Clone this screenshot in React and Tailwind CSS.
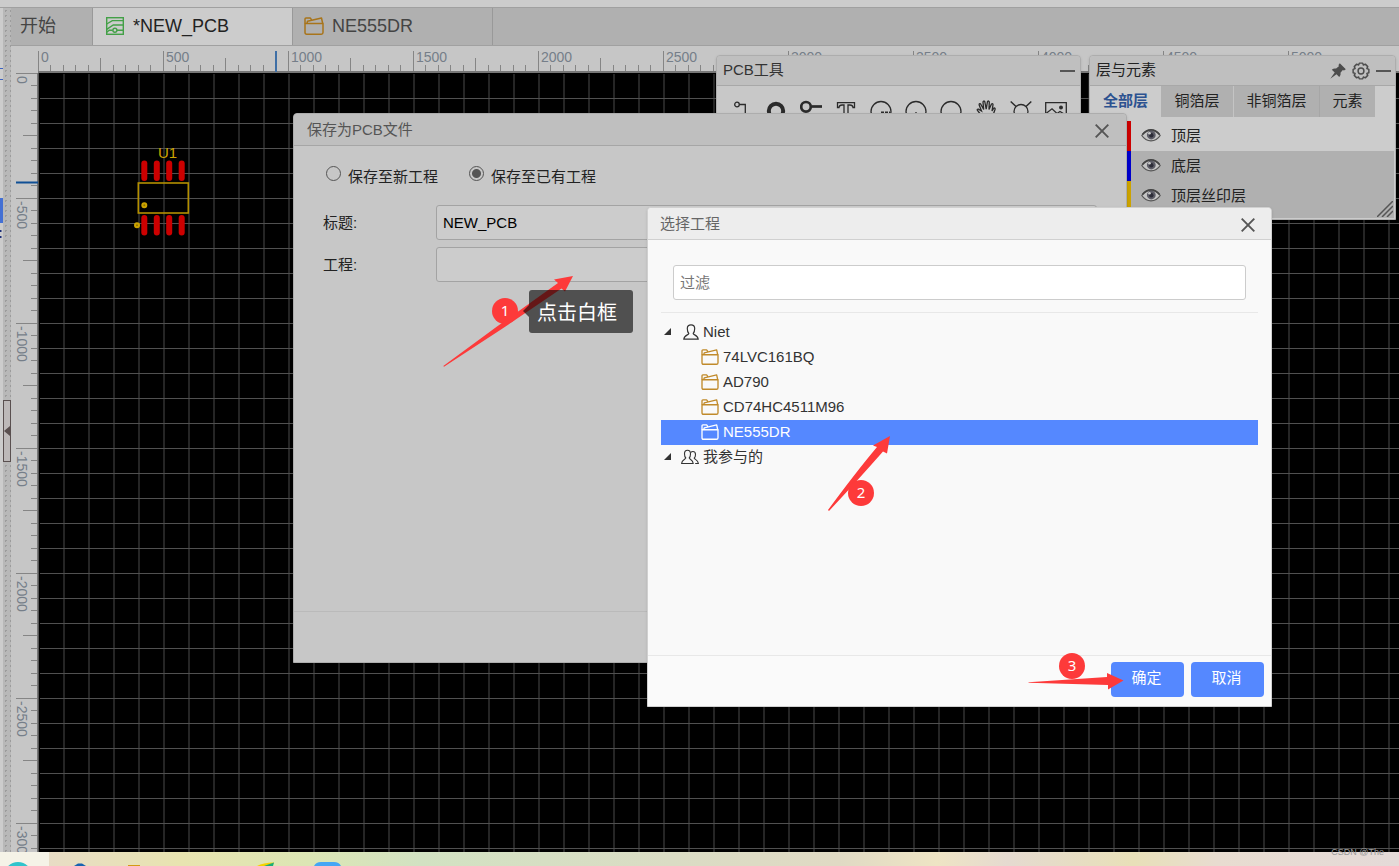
/**
 * PCB editor workspace with the "save as PCB" dialog and the project picker
 * on top, plus numbered guide marks for the three steps.
 */
import { useState } from 'react'

const STEP = 12.5
const TOP_TICKS = Array.from({ length: 109 }, (_, i) => i)
const SIDE_TICKS = Array.from({ length: 66 }, (_, i) => i)

const LAYERS = [
  { name: '顶层', color: 'bg-[#cc0000]', row: 'bg-[#cccccc]' },
  { name: '底层', color: 'bg-[#0000cc]', row: 'bg-[#b0b0b0]' },
  { name: '顶层丝印层', color: 'bg-[#cca300]', row: 'bg-[#b0b0b0]' },
]

const PROJECTS = ['74LVC161BQ', 'AD790', 'CD74HC4511M96', 'NE555DR']

function FolderIcon({ className }) {
  return (
    <svg className={className} viewBox="0 0 20 18" fill="none" stroke="currentColor" strokeWidth="1.5" strokeLinejoin="round">
      <path d="M1 6.500h18v9q0 1.700-1.700 1.700H2.700Q1 17.200 1 15.500z" />
      <path d="M1 6.500V2q0-1 1-1h4.200l1.300 1.700M3 6.200l.5-1.900L17.500 1l1.200 5.500" />
    </svg>
  )
}

function BoardIcon() {
  return (
    <svg className="w-[18px] h-[18px] shrink-0" viewBox="0 0 18 18" fill="none" stroke="#43a047" strokeWidth="1.400">
      <rect x="0.700" y="0.700" width="16.600" height="16.600" />
      <path d="M.7 7 6.300 3.600h11M.7 12.300 7.300 8h10M.7 15.200l2.600-1.900h3.400M11 13.300h6.300" />
      <circle cx="8.900" cy="13.200" r="2" />
    </svg>
  )
}

function CloseIcon() {
  return (
    <svg className="w-[14px] h-[14px]" viewBox="0 0 14 14" stroke="#555" strokeWidth="1.900">
      <path d="M0.700 0.700l12.600 12.600M13.300 0.700L0.700 13.300" />
    </svg>
  )
}

function UserIcon() {
  return (
    <svg className="w-4 h-4 shrink-0" viewBox="0 0 16 16" fill="none" stroke="#333" strokeWidth="1.200">
      <path d="M5.800 9.500C4.500 8 4.300 6.500 4.300 4.500 4.300 2 5.700.8 8 .8s3.700 1.200 3.700 3.700c0 2-.2 3.500-1.500 5 0 1.500 4.700 1.500 5 5.700H.8c.3-4.200 5-4.200 5-5.700z" />
    </svg>
  )
}

function UsersIcon() {
  return (
    <svg className="w-[18px] h-4 shrink-0" viewBox="0 0 18 16" fill="none" stroke="#333" strokeWidth="1.100">
      <path d="M4.800 9C3.700 8 3.500 6.500 3.500 4.800c0-2.300 1-3.500 3-3.500s3 1.200 3 3.500C9.500 6.500 9.300 8 8.200 9c.2 1.200 3.800 1.800 4 5.500H.6C.8 10.800 4.600 10.200 4.800 9z" />
      <path d="M10 3.400c.4-.6 1-.9 1.900-.9 1.800 0 2.600 1.100 2.600 3 0 1.600-.3 2.800-1.300 3.700.2 1.200 4 1.700 4.200 5.300h-3.200" />
    </svg>
  )
}

function EyeIcon() {
  return (
    <svg className="w-5 h-[13px] mb-0.5" viewBox="0 0 20 13" fill="none">
      <path d="M.8 6.500C3 2.800 6.500 1 10 1s7 1.800 9.200 5.500C17 9.800 13.500 11.800 10 11.800S3 9.800.8 6.500z" fill="#c4c4c4" stroke="#555" strokeWidth="1.200" />
      <path d="M1.500 5.500C4 2.500 7 1 10 1s6 1.500 8.500 4.500" stroke="#444" strokeWidth="1.800" />
      <circle cx="10.300" cy="6" r="4.400" fill="#5c5c66" />
      <circle cx="10.300" cy="6.200" r="2.200" fill="#2c2c38" />
      <circle cx="8.500" cy="4.300" r="1.300" fill="#ccc" />
    </svg>
  )
}

function ToolIcon({ children }) {
  return (
    <svg className="w-[22px] h-[22px]" viewBox="0 0 22 22" fill="none" stroke="#2b2b2b" strokeWidth="1.300">
      {children}
    </svg>
  )
}

const TOOLS = [
  { name: '导线', icon: <><circle cx="7" cy="4.500" r="2.300" /><path d="M9.300 4.500h6v14" /></> },
  { name: '焊盘', icon: <circle cx="11" cy="11" r="7.200" strokeWidth="4" /> },
  { name: '过孔', icon: <><circle cx="6" cy="6.800" r="4.800" strokeWidth="2.700" /><path d="M11.500 6.500H22" strokeWidth="2.700" /></> },
  { name: '文本', icon: <path d="M2.500 2.700h17V7.500H18q-.3-2.500-3-2.500h-2V20H9V5H7q-2.700 0-3 2.500H2.500z" /> },
  { name: '圆弧', icon: <><circle cx="11" cy="11.500" r="10" /><path d="M11 12.300h9" strokeWidth="1.800" strokeDasharray="3 1" /></> },
  { name: '中心圆弧', icon: <><circle cx="11" cy="11.500" r="10" /><path d="M11 12v3" strokeWidth="1.300" /></> },
  { name: '圆', icon: <circle cx="11" cy="11.500" r="10" /> },
  { name: '移动', icon: <path d="M6 15 2.500 10.500q-.8-1.700 1-1.300L6.500 11 4.200 5q-.2-1.700 1.300-1.200L8.700 9.500 8 2q.5-1.800 1.800-.3l1.400 7.500L12.500 1.500q1.300-1.200 1.800.5L14 9.500l2.500-5.500q1.500-.8 1.500.8L17 11l2-3q1.500-.2 1 1.500L17 18q-6 4-11-3z" /> },
  { name: '固定孔', icon: <><circle cx="11" cy="11.500" r="7" /><path d="M.7 1.500 6 6.500M21.300 1.500 16 6.500" strokeWidth="1.500" /></> },
  { name: '图片', icon: <><path d="M.7 2.700h20.600v17H.7z" /><path d="M1 13.500l6-4.700 5 4.700 3-2 5 3" /><circle cx="16" cy="7.500" r="1.300" fill="#2b2b2b" /></> },
]

function TopRuler() {
  return (
    <div className="flex h-[27px] shrink-0 bg-[#c6c6c6]">
      <div className="w-[27px] shrink-0" />
      <svg className="flex-1 h-full min-w-0 overflow-hidden" width="100%">
        {TOP_TICKS.map((i) => {
          const x = Math.floor(i * STEP) + 0.5
          const top = i % 10 === 0 ? 5 : i % 5 === 0 ? 12 : 19
          return <path key={i} d={`M${x} ${top}V25`} stroke="#858585" />
        })}
        {TOP_TICKS.filter((i) => i % 10 === 0).map((i) => (
          <text key={i} x={i * STEP + 3} y="16" fontSize="14" fill="#757e89">{i * 50}</text>
        ))}
        <rect x="0" y="25" width="100%" height="2" fill="#777777" />
        <path d="M238 5v21" stroke="#3f6fa6" strokeWidth="2" />
      </svg>
    </div>
  )
}

function SideRuler() {
  return (
    <svg className="w-[27px] h-full shrink-0 bg-[#c6c6c6] overflow-hidden">
      {SIDE_TICKS.map((i) => {
        const y = Math.floor(i * STEP) + 0.5
        const left = i % 10 === 0 ? 5 : i % 5 === 0 ? 12 : 20
        return <path key={i} d={`M${left} ${y}H27`} stroke="#858585" />
      })}
      {SIDE_TICKS.filter((i) => i % 10 === 0).map((i) => (
        <text key={i} transform={`translate(6 ${i * STEP + 3}) rotate(90)`} fontSize="14" fill="#757e89">
          {i === 0 ? 0 : i * -50}
        </text>
      ))}
      <path d="M26.500 0V2000" stroke="#777777" />
      <path d="M5 109.500H27" stroke="#0f4f95" strokeWidth="2" />
    </svg>
  )
}

function BoardCanvas() {
  const pads = [106.3, 118.8, 131.2, 143.7]
  return (
    <svg className="flex-1 h-full min-w-0 bg-black" width="100%">
      <defs>
        <pattern id="grid" width="25" height="25" patternUnits="userSpaceOnUse">
          <path d="M1 0v25" stroke="#4a4a4a" />
          <path d="M0 0.500h25" stroke="#505050" />
        </pattern>
      </defs>
      <rect width="100%" height="100%" fill="url(#grid)" />
      <rect width="100%" height="1" fill="#000" />
      <rect width="1" height="100%" fill="#555" />
      <rect x="1" width="1" height="100%" fill="#000" />
      {pads.map((x) => (
        <g key={x} stroke="#cc0000" strokeWidth="6" strokeLinecap="round">
          <path d={`M${x} 90.500v14.500`} />
          <path d={`M${x} 145v14.500`} />
        </g>
      ))}
      <rect x="100.300" y="110" width="50" height="30" fill="none" stroke="#b38f00" strokeWidth="1.600" />
      <g fill="#8f7200" stroke="#cca300" strokeWidth="2">
        <circle cx="106.300" cy="132.300" r="2" />
        <circle cx="99" cy="152.300" r="2" />
      </g>
      <text x="120" y="85" fontSize="15" fill="#cca300">U1</text>
    </svg>
  )
}

function EditorTabs() {
  return (
    <nav className="flex h-[39px] shrink-0 border-y border-[#a0a0a0] bg-[#b0b0b0] text-lg text-[#444]">
      <button className="w-[82px] pb-0.5 pl-[9px] text-left border-r border-[#999]">开始</button>
      <button className="w-[200px] pb-0.5 pl-[13px] flex items-center gap-[9px] border-r border-[#999] bg-[#cccccc] text-[#222]">
        <BoardIcon />
        <span>*NEW_PCB</span>
      </button>
      <button className="w-[200px] pb-0.5 pl-[11px] flex items-center gap-2 border-r border-[#999]">
        <FolderIcon className="w-5 h-[18px] text-[#a8741a]" />
        <span>NE555DR</span>
      </button>
    </nav>
  )
}

function ToolsPanel() {
  return (
    <section className="absolute top-[55px] right-[318px] w-[365px] rounded-t border border-[#adadad] bg-[#c8c8c8] shadow">
      <header className="flex h-[30px] items-center justify-between rounded-t border-b border-[#a8a8a8] bg-[#bfbfbf] pl-1.5 pr-[5px] text-[15px] text-[#333]">
        <h2>PCB工具</h2>
        <button aria-label="收起" className="w-[15px] h-0.5 bg-[#555]" />
      </header>
      <div className="flex gap-[13px] pt-[14px] pb-4 pl-[13px]">
        {TOOLS.map((tool) => (
          <button key={tool.name} aria-label={tool.name}>
            <ToolIcon>{tool.icon}</ToolIcon>
          </button>
        ))}
      </div>
    </section>
  )
}

function LayersPanel() {
  return (
    <section className="absolute top-[55px] right-[3px] w-[307px] h-[165px] flex flex-col rounded-t border border-[#adadad] bg-[#cccccc] text-[15px] text-[#222] shadow">
      <header className="flex h-[30px] shrink-0 items-center rounded-t border-b border-[#a8a8a8] bg-[#bfbfbf] pl-1.5 pr-1 gap-1.5">
        <h2 className="flex-1">层与元素</h2>
        <svg className="w-4 h-4" viewBox="0 0 16 16" fill="#4c4c4c">
          <path d="M9.800.3l6 5.900-1.800 1.200-1.200-.4-2.300 2.700c.3 1.700 0 3-1.300 4.200L6.500 11.200.3 15.700 4.700 9.500 1.800 6.700c1.300-1.200 2.700-1.500 4.300-1.200l2.800-2.300-.4-1.300z" />
        </svg>
        <svg className="w-[18px] h-[18px]" viewBox="0 0 16 16" fill="none" stroke="#4c4c4c" strokeWidth="1.300" strokeLinejoin="round">
          <path d="M6.500 1h3l.6 1.700 1.700-.8 2.200 2.200-.8 1.700 1.800.7v3l-1.800.6.8 1.800-2.200 2.200-1.700-.8-.6 1.700h-3l-.6-1.700-1.700.8L2 11.900l.8-1.800L1 9.500v-3l1.800-.7L2 4.100l2.200-2.200 1.700.8z" />
          <circle cx="8" cy="8" r="2.600" />
        </svg>
        <button aria-label="收起" className="w-[15px] h-0.5 bg-[#555]" />
      </header>
      <nav className="flex h-[31px] shrink-0">
        <button className="w-[71px] font-bold text-[#2c5290]">全部层</button>
        <button className="w-[73px] bg-[#b0b0b0] border-r border-[#c4c4c4]">铜箔层</button>
        <button className="w-[86px] bg-[#b0b0b0] border-r border-[#a6a6a6]">非铜箔层</button>
        <button className="w-[55px] bg-[#b0b0b0]">元素</button>
      </nav>
      <ul className="mt-1 mr-px mb-px pl-9 flex-1 flex flex-col overflow-hidden">
        {LAYERS.map((layer) => (
          <li key={layer.name} className="flex h-[30px] shrink-0">
            <span className={`w-[5px] ${layer.color}`} />
            <button className={`flex flex-1 items-center gap-2.5 pl-2.5 ${layer.row}`}>
              <EyeIcon />
              <span>{layer.name}</span>
            </button>
          </li>
        ))}
        <li className="flex-1 bg-[#b0b0b0]" />
      </ul>
      <svg className="absolute right-0.5 bottom-0.5 w-4 h-4" viewBox="0 0 16 16" stroke="#555" strokeWidth="1.500">
        <path d="M0 16 16 0M5 16 16 5M10 16l6-6" />
      </svg>
    </section>
  )
}

function SaveDialog() {
  const [target, setTarget] = useState('existing')
  const radio = 'mb-1.5 w-[15px] h-[15px] appearance-none rounded-full border border-[#555] checked:bg-[radial-gradient(circle,#555_4px,transparent_5px)]'
  const field = 'flex-1 h-[35px] rounded-[3px] border border-[#a3a3a3] bg-[#cccccc] px-1.5 text-black'

  return (
    <section role="dialog" aria-label="保存为PCB文件" className="absolute left-[293px] top-[113px] w-[834px] h-[550px] flex flex-col rounded-t border border-[#adadad] bg-[#c7c7c7] text-[15px] text-[#222] shadow">
      <header className="flex h-8 shrink-0 items-center justify-between rounded-t border-b border-[#a6a6a6] bg-[#bfbfbf] pl-[13px] pr-[17px] text-[#555]">
        <h2 className="pt-0.5">保存为PCB文件</h2>
        <button aria-label="关闭" className="pt-0.5"><CloseIcon /></button>
      </header>
      <form className="flex-1 pt-5 pl-[29px] pr-[29px]">
        <div className="flex gap-[31px] pl-[3px] leading-5">
          <label className="flex items-center gap-[7px]">
            <input type="radio" name="target" className={radio} checked={target === 'new'} onChange={() => setTarget('new')} />
            保存至新工程
          </label>
          <label className="flex items-center gap-[7px]">
            <input type="radio" name="target" className={radio} checked={target === 'existing'} onChange={() => setTarget('existing')} />
            保存至已有工程
          </label>
        </div>
        <div className="mt-[18px] flex items-center">
          <label htmlFor="title" className="w-[113px] pt-0.5">标题:</label>
          <input id="title" defaultValue="NEW_PCB" className={field} />
        </div>
        <div className="mt-[7px] flex items-center">
          <label htmlFor="project" className="w-[113px] pt-0.5">工程:</label>
          <input id="project" className={field} />
        </div>
      </form>
      <footer className="h-[51px] border-t border-[#bababa]" />
    </section>
  )
}

function ProjectDialog() {
  const [selected, setSelected] = useState('NE555DR')
  const button = 'w-[73px] h-[35px] pb-0.5 pr-0.5 rounded bg-[#5588ff] text-white'

  return (
    <section role="dialog" aria-label="选择工程" className="absolute left-[647px] top-[207px] w-[625px] h-[500px] flex flex-col rounded-t border border-[#d0d0d0] bg-[#f9f9f9] text-[15px] text-[#333] shadow">
      <header className="flex h-8 shrink-0 items-center justify-between rounded-t border-b border-[#d0d0d0] bg-[#ededed] pl-3 pr-4 text-[#666]">
        <h2 className="pt-0.5">选择工程</h2>
        <button aria-label="关闭" className="pt-0.5"><CloseIcon /></button>
      </header>
      <div className="flex-1 px-[13px] pt-[25px]">
        <div className="flex border-b border-[#e8e8e8] px-3 pb-3">
          <input aria-label="过滤" placeholder="过滤" className="flex-1 h-[35px] rounded-[3px] border border-[#ccc] bg-white px-1.5 placeholder:text-[#777]" />
        </div>
        <ul className="pt-[7px] leading-[23px]">
          <li>
            <div className="flex items-center pb-0.5 pl-[3px]">
              <svg className="w-[7px] h-[7px] mr-3" viewBox="0 0 8 8" fill="#333"><path d="M8 0v8H0z" /></svg>
              <UserIcon />
              <span className="pl-1">Niet</span>
            </div>
            <ul>
              {PROJECTS.map((name) => (
                <li key={name}>
                  <button
                    onClick={() => setSelected(name)}
                    className={`flex w-full items-center gap-1 pb-0.5 pl-10 ${name === selected ? 'bg-[#5588ff] text-white' : ''}`}
                  >
                    <FolderIcon className={`w-[18px] h-4 ${name === selected ? 'text-white' : 'text-[#c08a2a]'}`} />
                    <span>{name}</span>
                  </button>
                </li>
              ))}
            </ul>
          </li>
          <li className="flex items-center pb-0.5 pl-[3px]">
            <svg className="w-[7px] h-[7px] mr-2.5" viewBox="0 0 8 8" fill="#333"><path d="M8 0v8H0z" /></svg>
            <UsersIcon />
            <span className="pl-1">我参与的</span>
          </li>
        </ul>
      </div>
      <footer className="flex h-[51px] shrink-0 justify-end gap-[7px] border-t border-[#e8e8e8] bg-[#fafafa] pt-1.5 pr-[7px]">
        <button className={button}>确定</button>
        <button className={button}>取消</button>
      </footer>
    </section>
  )
}

// Step badge, placed by the caller over the workspace
function Badge({ n, className }) {
  return (
    <span className={`absolute flex w-[26px] h-[26px] justify-center rounded-full bg-[#fd3a3a] text-[15px] leading-6 text-white font-['Noto_Sans',sans-serif] ${className}`}>
      {n}
    </span>
  )
}

function GuideMarks() {
  return (
    <div className="pointer-events-none">
      <svg className="absolute left-[443px] top-[275px] w-[131px] h-[92px]" viewBox="443 275 131 92">
        <path d="M573 276 565 291.500 561.500 288.500 501 329.500 444 366.700 443.300 366 497 326.500 558 283 554 279.500z" fill="#fd3a3a" />
      </svg>
      <Badge n="1" className="left-[492px] top-[298px]" />
      <div className="absolute left-[529px] top-[290px] h-[43px] w-[104px] rounded-[3px] bg-black/60 text-center text-xl leading-[46px] text-white pr-2">
        点击白框
        <svg className="absolute right-full top-[15px] w-1.5 h-3" viewBox="0 0 6 12"><path d="M6 0v12L0 6z" fillOpacity="0.600" /></svg>
      </div>
      <svg className="absolute left-[827px] top-[435px] w-[65px] h-[77px]" viewBox="827 435 65 77" fill="#fd3a3a">
        <path d="M890 436 887 453.500 883 451.500Q858 480 829 511L828 510Q856 472 877 447L873 445.500z" />
      </svg>
      <Badge n="2" className="left-[848px] top-[480px]" />
      <svg className="absolute left-[1028px] top-[672px] w-[96px] h-[18px]" viewBox="1028 672 96 18" fill="#fd3a3a">
        <path d="M1123.500 680.500 1108 689.500V685L1028.500 682.800V682.200L1107 677V673z" />
      </svg>
      <Badge n="3" className="left-[1059px] top-[653px]" />
    </div>
  )
}

function Taskbar() {
  return (
    <footer className="flex h-[14px] shrink-0 bg-[linear-gradient(90deg,#e8dcc6_3%,#e8e4b0_13%,#dce6b4_22%,#d2e2c2_30%,#dadcc4_48%,#e0dac4_60%,#eee4c4_67%,#e5dad0_72%,#e8e0b8_81%,#e8dcd0_87%,#e4dad8)]">
      <div className="w-[49px] bg-[#f5f3e7]" />
      <svg className="w-[350px] h-[14px] -ml-[49px]" viewBox="0 0 350 14">
        <circle cx="18" cy="24" r="14" fill="#30c4cc" />
        <path d="M74 14l4-2.500h4l4 2.500z" fill="#1763b0" />
        <path d="M128 14v-1h12v1z" fill="#d39a14" />
        <path d="M257 14q6-3.500 17-3.500l-2 3.500z" fill="#f6d400" />
        <path d="M264 14q6-2.500 10-3.500l-1 3.500z" fill="#1bae78" />
        <path d="M314 14q2-4 7-4h13q5 0 7 4z" fill="#44a6f5" />
      </svg>
    </footer>
  )
}

export default function App() {
  return (
    <div className="relative flex h-screen flex-col overflow-hidden bg-[#cccccc] font-['Liberation_Sans','Noto_Sans_CJK_SC',sans-serif]">
      <div className="h-[7px] shrink-0" />
      <div className="flex flex-1 min-h-0">
        <svg className="w-[3px] h-full shrink-0 border-t border-[#a0a0a0]">
          <path d="M0 60.500h3M0 71.500h3" stroke="#3d62c0" />
          <rect y="190" width="3" height="25" fill="#4470d4" />
          <path d="M0 223h1.500M0 229h1.500" stroke="#1c2f78" strokeWidth="2" />
        </svg>
        <div className="flex w-2 shrink-0 items-center border-t border-[#a0a0a0] bg-[#b8b8b8] bg-[radial-gradient(circle,#9c9c9c_1px,transparent_1px)] bg-[length:5px_5px] pt-0.5">
          <button aria-label="折叠" className="flex h-[62px] w-2 items-center border border-[#5a5050] bg-[#bdb9b9]">
            <svg className="w-1.5 h-2.5" viewBox="0 0 6 10" fill="#5a5050"><path d="M0 5 6 0v10z" /></svg>
          </button>
        </div>
        <main className="flex flex-1 min-w-0 flex-col">
          <EditorTabs />
          <TopRuler />
          <div className="flex flex-1 min-h-0">
            <SideRuler />
            <BoardCanvas />
          </div>
        </main>
      </div>
      <Taskbar />

      <ToolsPanel />
      <LayersPanel />
      <SaveDialog />
      <ProjectDialog />
      <GuideMarks />
      <span className="absolute right-[15px] bottom-2 text-[9px] leading-3 text-[#999]">CSDN @The</span>
    </div>
  )
}
